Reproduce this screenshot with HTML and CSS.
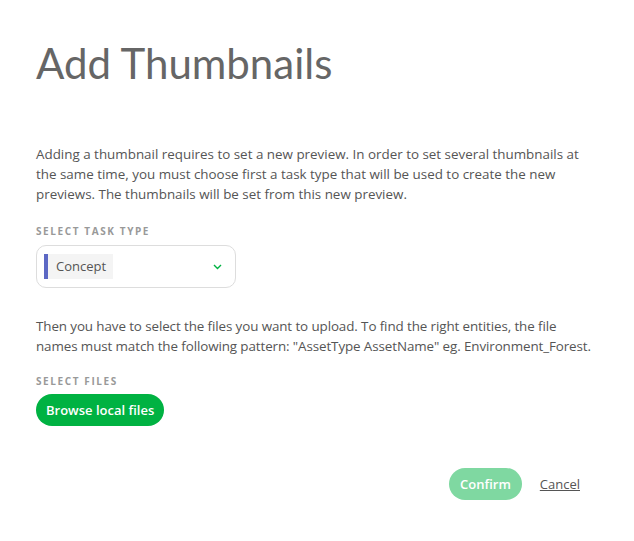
FILE: index.html
```html
<!DOCTYPE html>
<html>
<head>
<meta charset="utf-8">
<link rel="stylesheet" href="styles.css">
</head>
<body>
<div class="modal">
  <h1 class="title">Add Thumbnails</h1>
  <p class="text first">Adding a thumbnail requires to set a new preview. In order to set several thumbnails at the same time, you must choose first a task type that will be used to create the new previews. The thumbnails will be set from this new preview.</p>
  <div class="label label-task">Select task type</div>
  <div class="select">
    <span class="bar"></span>
    <span class="chip">Concept</span>
    <svg class="chev" width="9" height="6" viewBox="0 0 9 6"><path d="M1 1 L4.5 4.5 L8 1" fill="none" stroke="#00b242" stroke-width="1.4"/></svg>
  </div>
  <p class="text second">Then you have to select the files you want to upload. To find the right entities, the file<br>names must match the following pattern: "AssetType AssetName" eg. Environment_Forest.</p>
  <div class="label label-files">Select files</div>
  <button class="browse">Browse local files</button>
  <div class="actions">
    <button class="confirm">Confirm</button>
    <a class="cancel">Cancel</a>
  </div>
</div>
</body>
</html>
```
FILE: styles.css
```css
html, body { margin: 0; padding: 0; background: #fff; }
body { font-family: "Open Sans", sans-serif; color: #666; }
.modal { padding: 36px 36px 0 36px; width: 562px; }
.title {
  font-family: Lato, sans-serif;
  font-weight: 400;
  font-size: 42px;
  line-height: 54px;
  margin: 0;
  color: #666;
}
.text { font-size: 13.4px; line-height: 20px; margin: 0; color: #555; width: 562px; }
.first { margin-top: 54px; }
.label {
  font-size: 10px;
  font-weight: 700;
  letter-spacing: 1.6px;
  text-transform: uppercase;
  color: #999;
  line-height: 14px;
}
.label-task { margin-top: 20px; }
.label-files { margin-top: 18px; }
.select {
  margin-top: 7px;
  width: 191px;
  height: 41px;
  border: 1px solid #ddd;
  border-radius: 10px;
  display: flex;
  align-items: center;
  padding-left: 7px;
  box-sizing: content-box;
}
.bar { width: 4px; height: 25px; background: #5c68c4; }
.chip {
  background: #f4f4f4;
  height: 25px;
  line-height: 25px;
  padding: 0 7px 0 8px;
  font-size: 13px;
  color: #555;
}
.chev { margin-left: auto; margin-right: 13px; }
.second { margin-top: 28px; white-space: nowrap; letter-spacing: -0.1px; }
.browse {
  margin-top: 6px;
  display: block;
  background: #00b242;
  color: #fff;
  border: none;
  border-radius: 16px;
  height: 32px;
  padding: 0 10px;
  font-family: "Open Sans", sans-serif;
  font-weight: 600;
  font-size: 13px;
}
.actions {
  display: flex;
  justify-content: flex-end;
  align-items: center;
  margin-top: 42px;
  padding-right: 18px;
}
.confirm {
  background: #7fd8a1;
  color: #fff;
  border: none;
  border-radius: 16px;
  height: 32px;
  padding: 0 11px;
  font-family: "Open Sans", sans-serif;
  font-weight: 600;
  font-size: 13px;
}
.cancel {
  margin-left: 18px;
  font-size: 13px;
  color: #555;
  text-decoration: underline;
}
```
